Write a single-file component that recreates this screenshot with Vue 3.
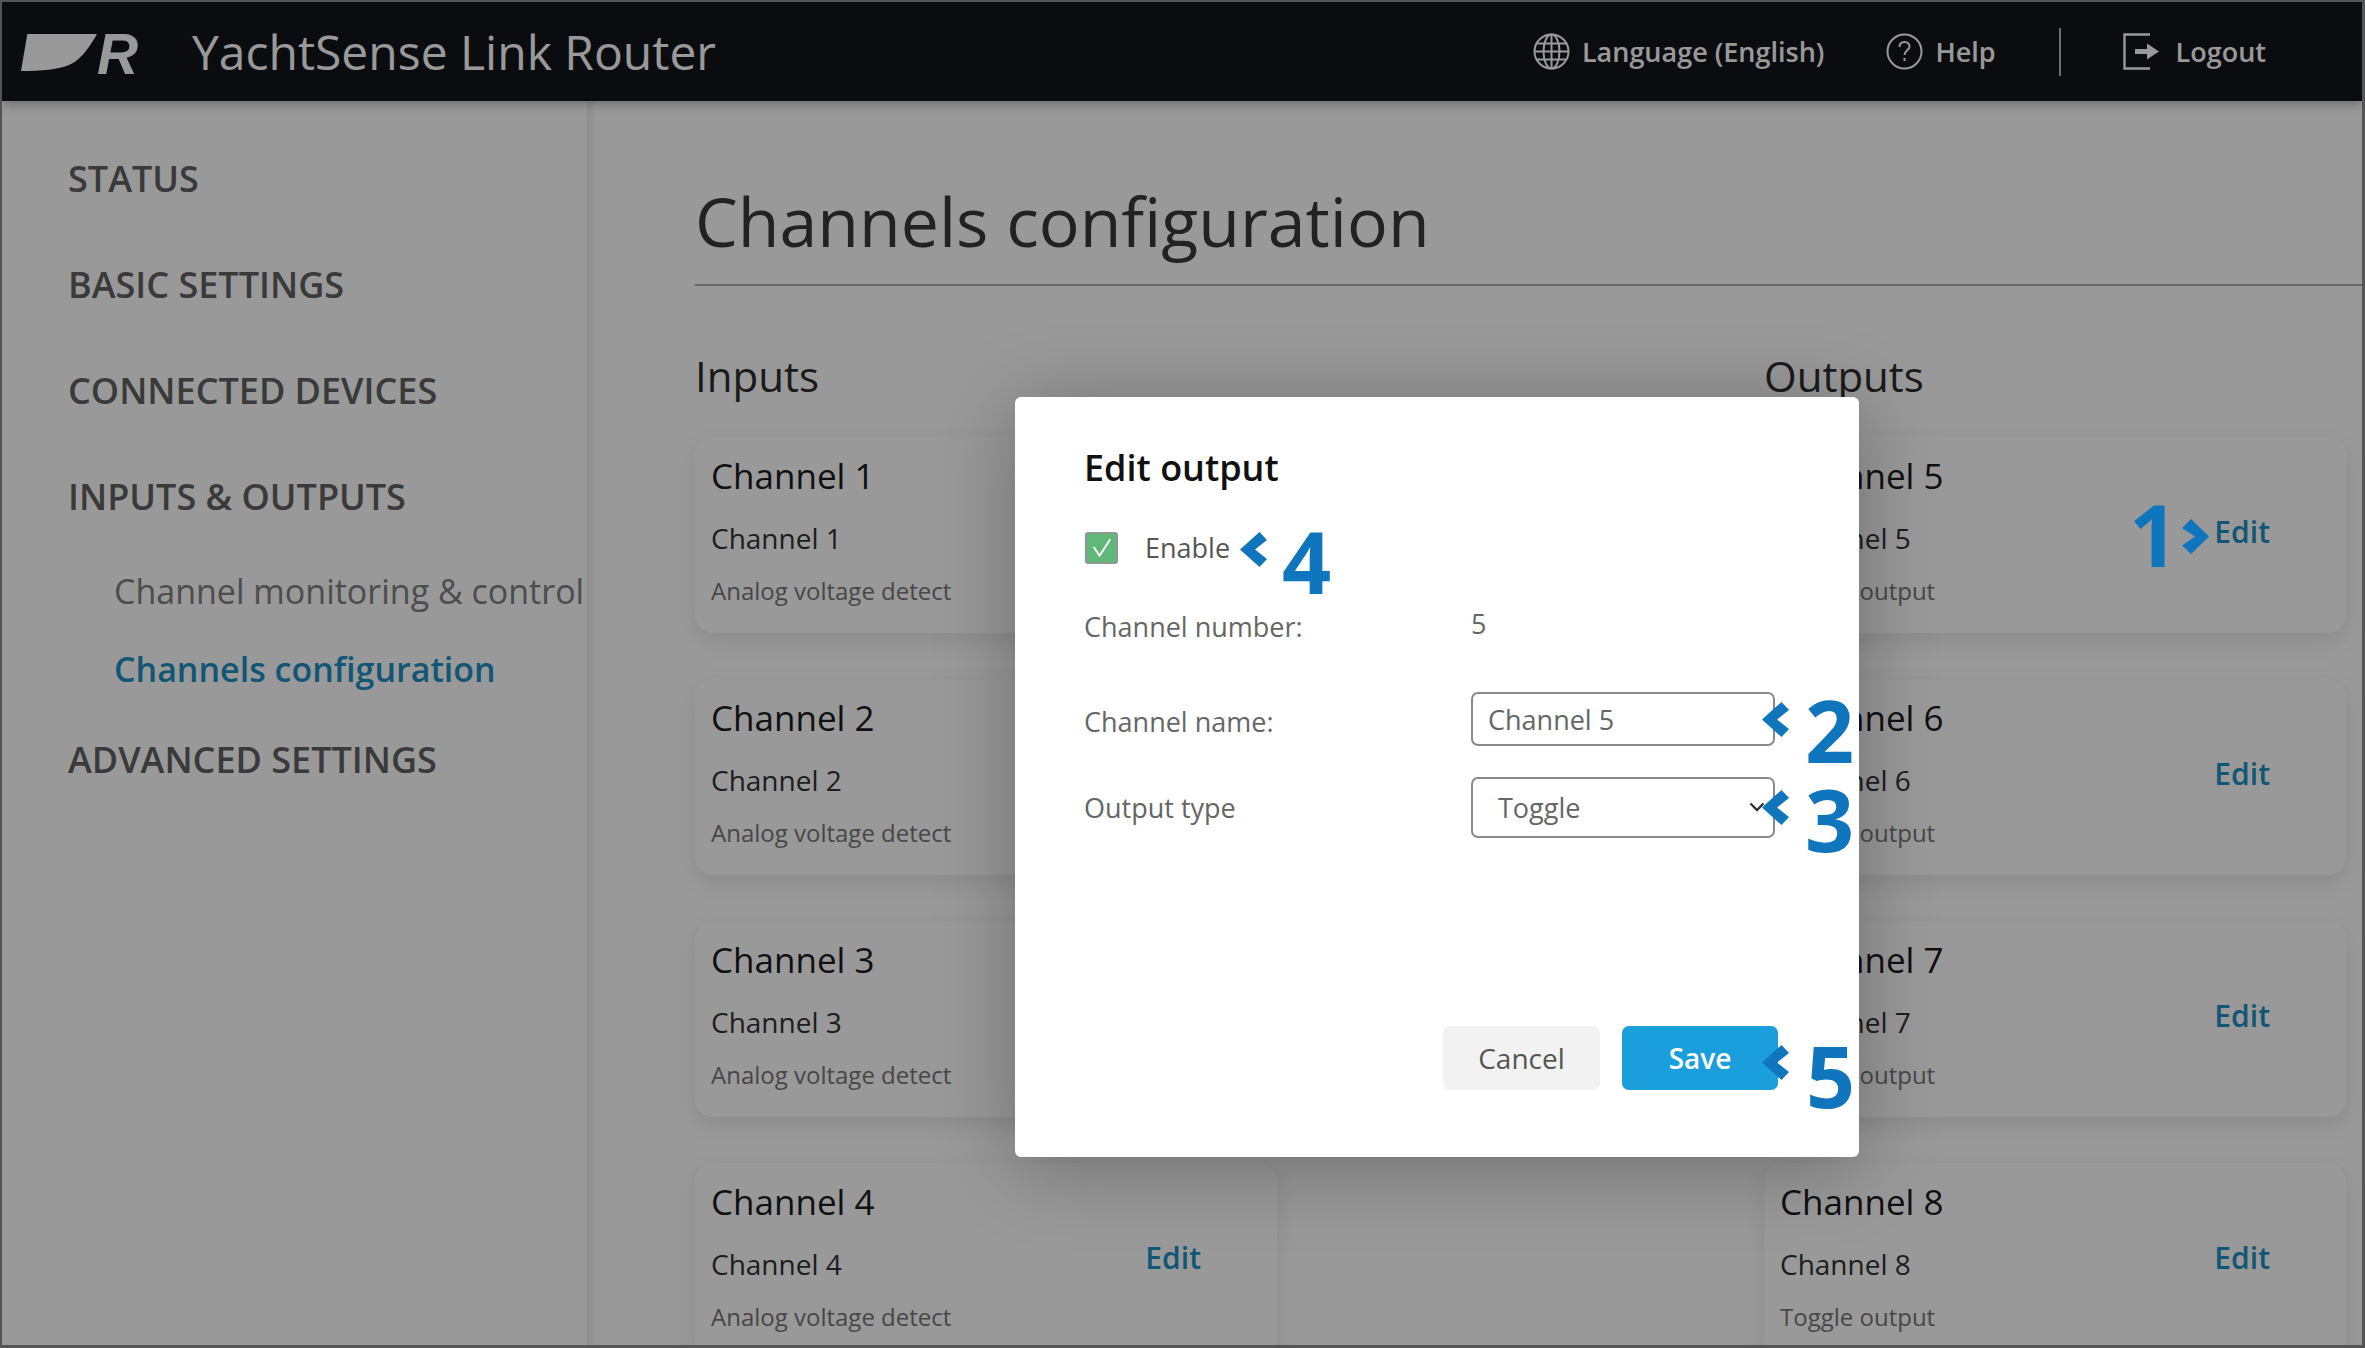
<script setup>
const inputs = [1, 2, 3, 4].map((n) => ({ n, detail: 'Analog voltage detect' }))
const outputs = [5, 6, 7, 8].map((n) => ({ n, detail: 'Toggle output' }))
const callouts = [
  { digit: '2', chevLeft: 747, chevTop: 305, digitLeft: 790, digitTop: 303 },
  { digit: '3', chevLeft: 747, chevTop: 393, digitLeft: 790, digitTop: 392 },
  { digit: '4', chevLeft: 225, chevTop: 135, digitLeft: 267, digitTop: 134 },
  { digit: '5', chevLeft: 747, chevTop: 648, digitLeft: 791, digitTop: 648 },
]
</script>

<template>
  <div class="frame">
    <header class="topbar">
      <svg class="logo" width="84" height="42" viewBox="0 0 84 42">
        <path d="M7 0H84C76 14 68 26 56 33C42 40 22 41 0 41Z" fill="#fff" />
      </svg>
      <span class="logo-r">R</span>
      <h1 class="product">YachtSense Link Router</h1>
      <div class="spacer"></div>
      <svg class="ico" width="37" height="37" viewBox="0 0 37 37" fill="none" stroke="#fff" stroke-width="2">
        <circle cx="18.5" cy="18.5" r="17" />
        <ellipse cx="18.5" cy="18.5" rx="8" ry="17" />
        <path d="M18.5 1.5V35.5M3 10.5H34M1.5 18.5H35.5M3 26.5H34" />
      </svg>
      <span class="tool lang">Language (English)</span>
      <svg class="ico" width="37" height="37" viewBox="0 0 37 37" fill="none" stroke="#fff" stroke-width="2">
        <circle cx="18.5" cy="18.5" r="17" />
        <path d="M13.5 14C13.5 10.5 16 9 18.5 9C21.5 9 23.5 11 23.5 13.5C23.5 17 18.5 17.5 18.5 22" />
        <path d="M18.5 25V28" />
      </svg>
      <span class="tool help">Help</span>
      <span class="divider"></span>
      <svg class="ico" width="37" height="37" viewBox="0 0 37 37" fill="none">
        <path d="M27 1.5H1.5V35.5H27" stroke="#fff" stroke-width="2.4" />
        <path d="M12 16H24V10.5L36 18.5L24 26.5V21H12Z" fill="#fff" />
      </svg>
      <span class="tool logout">Logout</span>
    </header>

    <div class="body">
      <aside class="sidebar">
        <nav class="nav">
          <a class="nav-top">STATUS</a>
          <a class="nav-top">BASIC SETTINGS</a>
          <a class="nav-top">CONNECTED DEVICES</a>
          <div>
            <a class="nav-top">INPUTS &amp; OUTPUTS</a>
            <div class="sub">
              <a class="sub-link">Channel monitoring &amp; control</a>
              <a class="sub-link active">Channels configuration</a>
            </div>
          </div>
          <a class="nav-top">ADVANCED SETTINGS</a>
        </nav>
      </aside>

      <main class="main">
        <h2 class="page-title">Channels configuration</h2>
        <div class="columns">
          <section>
            <h3 class="col-title">Inputs</h3>
            <div class="cards">
              <article v-for="c in inputs" :key="c.n" class="card">
                <div>
                  <div class="card-title">Channel {{ c.n }}</div>
                  <div class="card-name">Channel {{ c.n }}</div>
                  <div class="card-detail">{{ c.detail }}</div>
                </div>
                <a class="edit">Edit</a>
              </article>
            </div>
          </section>
          <section>
            <h3 class="col-title">Outputs</h3>
            <div class="cards">
              <article v-for="c in outputs" :key="c.n" class="card">
                <div>
                  <div class="card-title">Channel {{ c.n }}</div>
                  <div class="card-name">Channel {{ c.n }}</div>
                  <div class="card-detail">{{ c.detail }}</div>
                </div>
                <a class="edit">Edit</a>
              </article>
            </div>
          </section>
        </div>
      </main>
    </div>

    <div class="overlay">
      <div class="callout-one">
        <span class="digit">1</span>
        <svg class="chev-right" width="27" height="35" viewBox="0 0 27 35">
          <path d="M9 0L0 9L13 17.5L0 26.5L9 35L27 17.5Z" fill="#0f75bc" />
        </svg>
      </div>

      <div class="modal">
        <h4 class="modal-title">Edit output</h4>
        <label class="enable">
          <span class="check">
            <svg width="30" height="28" viewBox="0 0 30 28" fill="none">
              <path d="M7 13L13 22L24 5" stroke="#fff" stroke-width="2" />
            </svg>
          </span>
          <span class="enable-text">Enable</span>
        </label>

        <div class="row row-number">
          <span class="label">Channel number:</span>
          <span class="value">5</span>
        </div>
        <div class="row row-name">
          <span class="label label-name">Channel name:</span>
          <input class="field input" value="Channel 5" readonly />
        </div>
        <div class="row row-type">
          <span class="label">Output type</span>
          <div class="select-wrap">
            <select class="field select">
              <option>Toggle</option>
            </select>
            <svg class="select-arrow" width="16" height="10" viewBox="0 0 16 10" fill="none">
              <path d="M1.5 1.5L8 8L14.5 1.5" stroke="#333" stroke-width="2.4" />
            </svg>
          </div>
        </div>

        <div class="actions">
          <button class="btn cancel">Cancel</button>
          <button class="btn save">Save</button>
        </div>

        <template v-for="c in callouts" :key="c.digit">
          <svg
            class="chev"
            width="27"
            height="35"
            viewBox="0 0 27 35"
            :style="{ left: c.chevLeft + 'px', top: c.chevTop + 'px' }"
          >
            <path d="M19.5 0L27 8L15 17.5L27 27L19.5 35L0 17.5Z" fill="#0f75bc" />
          </svg>
          <span class="digit floating" :style="{ left: c.digitLeft + 'px', top: c.digitTop + 'px' }">{{ c.digit }}</span>
        </template>
      </div>
    </div>
  </div>
</template>

<style>
html,
body {
  margin: 0;
  background: #fff;
}
</style>

<style scoped>
* {
  box-sizing: border-box;
}
.frame {
  position: relative;
  width: 2365px;
  height: 1348px;
  overflow: hidden;
  border: solid #555;
  border-width: 2px 3px 3px 2px;
  background: #fff;
  font-family: "Open Sans", "Noto Sans", sans-serif;
  display: flex;
  flex-direction: column;
}
.topbar {
  position: relative;
  z-index: 2;
  flex: none;
  height: 99px;
  display: flex;
  align-items: center;
  background: #111419;
  padding-left: 19px;
  padding-right: 96px;
  box-shadow: 0 3px 10px rgba(0, 0, 0, 0.3);
  color: #fff;
}
.logo {
  flex: none;
  margin-top: 2px;
  margin-left: 0;
  width: 76px;
}
.logo-r {
  font-family: "Liberation Sans", sans-serif;
  font-weight: 700;
  font-style: italic;
  font-size: 57px;
  line-height: 50px;
  width: 46px;
  margin-left: 0;
  color: #fff;
  margin-top: 4px;
}
.product {
  margin: 0 0 0 49px;
  font-size: 48px;
  font-weight: 400;
  line-height: 60px;
  white-space: nowrap;
}
.spacer {
  flex: 1;
}
.ico {
  flex: none;
}
.tool {
  font-size: 27px;
  font-weight: 600;
  line-height: 40px;
  white-space: nowrap;
}
.lang {
  margin-left: 12px;
  margin-right: 62px;
}
.help {
  margin-left: 12px;
}
.divider {
  width: 2px;
  height: 48px;
  background: #fff;
  opacity: 0.7;
  margin: 0 62px 0 63px;
}
.logout {
  margin-left: 16px;
}
.body {
  flex: 1;
  min-height: 0;
  display: flex;
}
.sidebar {
  flex: none;
  width: 588px;
  border-right: 3px solid #eee;
  box-shadow: 2px 0 6px rgba(0, 0, 0, 0.08);
  padding: 53px 0 0 66px;
}
.nav {
  display: flex;
  flex-direction: column;
  gap: 43px;
}
.nav-top {
  display: block;
  font-size: 36px;
  font-weight: 600;
  line-height: 50px;
  padding-bottom: 13px;
  color: #616161;
  white-space: nowrap;
}
.sub {
  display: flex;
  flex-direction: column;
  gap: 32px;
  margin-top: 33px;
  padding-left: 46px;
}
.sub-link {
  font-size: 34px;
  line-height: 46px;
  color: #808080;
  white-space: nowrap;
}
.sub-link.active {
  font-weight: 600;
  color: #1f8fc4;
}
.main {
  flex: 1;
  min-width: 0;
  padding: 74px 0 0 105px;
}
.page-title {
  margin: 0;
  font-size: 68px;
  font-weight: 400;
  line-height: 92px;
  padding-bottom: 17px;
  border-bottom: 2px solid #aaa;
  color: #3a3a3a;
  white-space: nowrap;
}
.columns {
  display: grid;
  grid-template-columns: 582px 582px;
  column-gap: 487px;
  margin-top: 62px;
}
.col-title {
  margin: 0 0 33px;
  font-size: 42px;
  font-weight: 400;
  line-height: 56px;
  color: #2e2e2e;
}
.cards {
  display: flex;
  flex-direction: column;
  gap: 46px;
}
.card {
  height: 196px;
  display: flex;
  align-items: center;
  justify-content: space-between;
  padding: 0 76px 0 16px;
  border-radius: 18px;
  background: #fff;
  box-shadow: 0 8px 22px rgba(0, 0, 0, 0.09);
}
.card > div {
  align-self: flex-start;
  padding-top: 16px;
}
.card-title {
  font-size: 35px;
  line-height: 46px;
  color: #1c1c1c;
  white-space: nowrap;
}
.card-name {
  margin-top: 21px;
  font-size: 28px;
  line-height: 36px;
  color: #333;
  white-space: nowrap;
}
.card-detail {
  margin-top: 19px;
  font-size: 24px;
  line-height: 32px;
  color: #777;
  white-space: nowrap;
}
.edit {
  font-size: 30px;
  font-weight: 600;
  line-height: 40px;
  color: #1f8fc4;
  padding-bottom: 6px;
}
.overlay {
  position: absolute;
  inset: 0;
  z-index: 5;
  background: rgba(0, 0, 0, 0.4);
  padding: 395px 0 0 1013px;
}
.callout-one {
  position: absolute;
  left: 2129px;
  top: 500px;
  width: 80px;
  height: 90px;
}
.callout-one .digit {
  position: absolute;
  left: -2px;
  top: 2px;
}
.chev-right {
  position: absolute;
  left: 51px;
  top: 17px;
}
.digit {
  font-size: 86px;
  font-weight: 700;
  line-height: 60px;
  color: #0f75bc;
  display: block;
  height: 62px;
}
.floating {
  position: absolute;
  z-index: 3;
}
.modal {
  position: relative;
  width: 844px;
  height: 760px;
  background: #fff;
  border-radius: 6px;
  padding: 46px 81px 0 69px;
  box-shadow: 0 10px 80px rgba(0, 0, 0, 0.28);
}
.modal-title {
  margin: 0;
  font-size: 36px;
  font-weight: 600;
  line-height: 50px;
  color: #111;
  white-space: nowrap;
}
.enable {
  display: flex;
  align-items: center;
  gap: 27px;
  margin-top: 39px;
  height: 32px;
}
.check {
  flex: none;
  width: 33px;
  height: 32px;
  margin-left: 1px;
  background: #5fb878;
  border: 2px solid #8a9a90;
  border-radius: 3px;
  display: flex;
}
.enable-text {
  font-size: 27px;
  line-height: 40px;
  color: #555;
}
.row {
  display: grid;
  grid-template-columns: 387px 304px;
}
.row-number {
  margin-top: 43px;
}
.row-name {
  margin-top: 45px;
  align-items: center;
}
.row-type {
  margin-top: 31px;
  align-items: center;
}
.label {
  font-size: 27px;
  line-height: 40px;
  color: #666;
  white-space: nowrap;
}
.label-name {
  padding-top: 5px;
}
.value {
  font-size: 27px;
  line-height: 34px;
  color: #666;
}
.field {
  display: block;
  width: 304px;
  border: 2px solid #8a8a8a;
  border-radius: 7px;
  background: #fff;
  font-family: inherit;
  font-size: 27px;
  color: #666;
  outline: none;
  margin: 0;
}
.input {
  height: 54px;
  padding: 0 15px;
}
.select-wrap {
  position: relative;
}
.select {
  height: 61px;
  padding: 0 25px;
  appearance: none;
  -webkit-appearance: none;
}
.select-arrow {
  position: absolute;
  left: 278px;
  top: 25px;
}
.actions {
  margin-top: 188px;
  display: flex;
  justify-content: flex-end;
  gap: 22px;
}
.btn {
  width: 157px;
  height: 64px;
  border: 0;
  border-radius: 7px;
  font-family: inherit;
  font-size: 28px;
  padding: 0;
}
.cancel {
  background: #f2f2f2;
  color: #555;
}
.save {
  width: 156px;
  background: #1a9fdc;
  color: #fff;
  font-weight: 600;
}
.chev {
  position: absolute;
  z-index: 3;
}
</style>
